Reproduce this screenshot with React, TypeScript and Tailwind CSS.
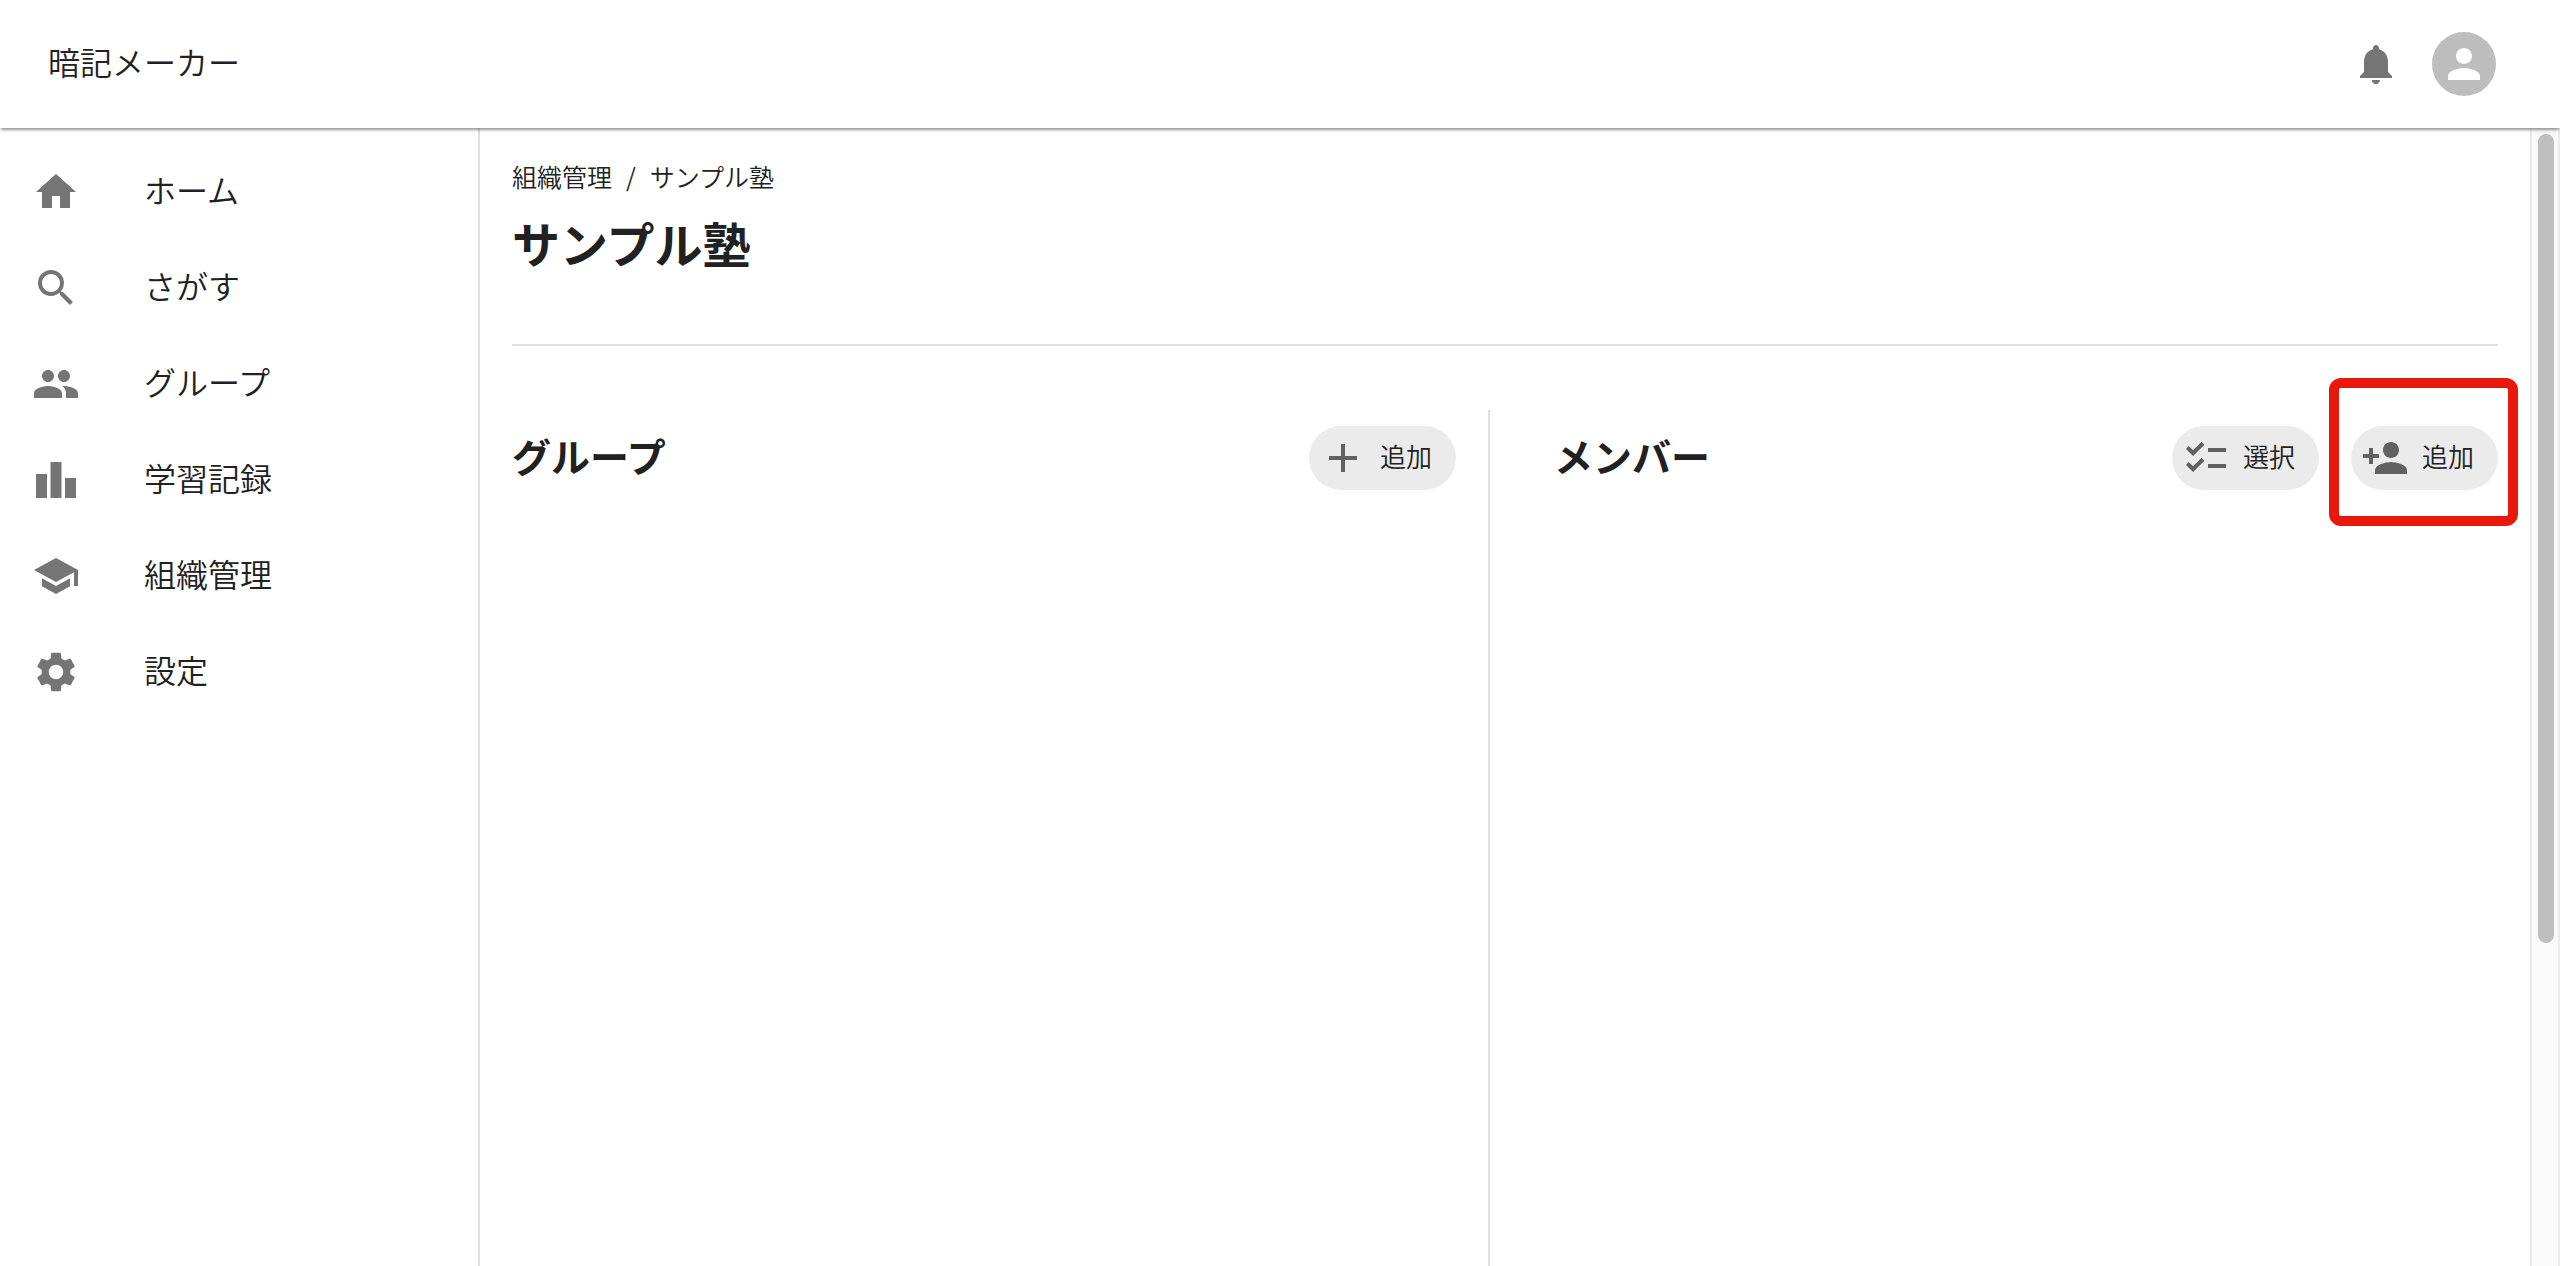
import type { ComponentType } from "react";
import {
  MdAdd,
  MdChecklist,
  MdHome,
  MdLeaderboard,
  MdNotifications,
  MdPeople,
  MdPerson,
  MdPersonAdd,
  MdSchool,
  MdSearch,
  MdSettings,
} from "react-icons/md";

type Icon = ComponentType<{ className?: string }>;

const navItems: { label: string; icon: Icon }[] = [
  { label: "ホーム", icon: MdHome },
  { label: "さがす", icon: MdSearch },
  { label: "グループ", icon: MdPeople },
  { label: "学習記録", icon: MdLeaderboard },
  { label: "組織管理", icon: MdSchool },
  { label: "設定", icon: MdSettings },
];

function Header() {
  return (
    <header className="z-10 flex h-32 shrink-0 items-center justify-between bg-white pr-16 pl-12 shadow-[0_4px_2px_-2px_rgba(0,0,0,0.2),0_2px_2px_0_rgba(0,0,0,0.14),0_2px_6px_0_rgba(0,0,0,0.12)]">
      <a href="#" className="pb-1.5 text-[32px] leading-12">
        暗記メーカー
      </a>
      <div className="flex items-center gap-8">
        <button type="button" aria-label="通知">
          <MdNotifications className="size-12 text-[#757575]" />
        </button>
        <button
          type="button"
          aria-label="アカウント"
          className="flex size-16 items-center justify-center rounded-full bg-[#bdbdbd]"
        >
          <MdPerson className="size-12 text-white" />
        </button>
      </div>
    </header>
  );
}

function Sidebar() {
  return (
    <nav className="w-120 shrink-0 border-r-2 border-[#e0e0e0] pt-4">
      <ul>
        {navItems.map(({ label, icon: ItemIcon }) => (
          <li key={label}>
            <a href="#" className="flex h-24 items-center gap-16 px-8">
              <ItemIcon className="size-12 text-[#757575]" />
              <span className="pb-1.5 text-[32px] leading-12">{label}</span>
            </a>
          </li>
        ))}
      </ul>
    </nav>
  );
}

function ChipButton({ label, icon: ChipIcon }: { label: string; icon: Icon }) {
  return (
    <button
      type="button"
      className="flex h-16 items-center gap-[13px] rounded-full bg-[#ebebeb] pr-6 pl-[10px] text-[26px] leading-10"
    >
      <ChipIcon className="size-12 text-[#616161]" />
      <span className="pb-1">{label}</span>
    </button>
  );
}

function Scrollbar() {
  return (
    <div className="w-[30px] shrink-0 border-x-2 border-[#ebebeb] bg-[#fafafa] px-1 pt-[6px]">
      <div className="ml-auto h-5/7 w-4 rounded-full bg-[#bfbfbf]" />
    </div>
  );
}

export default function App() {
  return (
    <div className="flex h-screen flex-col bg-white font-['Noto_Sans_CJK_JP',sans-serif] font-[350] text-[#212121]">
      <Header />
      <div className="flex min-h-0 flex-1">
        <Sidebar />
        <main className="flex min-w-0 flex-1 flex-col px-8 pt-[30px]">
          <div className="flex gap-3.5 text-[25px] leading-9">
            <a href="#">組織管理</a>
            <span>/</span>
            <a href="#">サンプル塾</a>
          </div>
          <h1 className="mt-3 text-[48px] leading-18 font-bold">サンプル塾</h1>
          <hr className="mt-[66px] border-t-2 border-[#e0e0e0]" />
          <div className="mt-16 flex flex-1">
            <section className="flex-1 pt-4">
              <div className="flex items-center justify-between">
                <h2 className="pb-1.5 text-[39px] leading-14 font-bold">
                  グループ
                </h2>
                <ChipButton label="追加" icon={MdAdd} />
              </div>
            </section>
            <div className="mr-16 ml-8 w-0.5 bg-[#e0e0e0]" />
            <section className="flex-1 pt-4">
              <div className="flex items-center justify-between">
                <h2 className="pb-1.5 text-[39px] leading-14 font-bold">
                  メンバー
                </h2>
                <div className="flex gap-8">
                  <ChipButton label="選択" icon={MdChecklist} />
                  <div className="relative">
                    <ChipButton label="追加" icon={MdPersonAdd} />
                    {/* highlight frame around the add-member button */}
                    <div className="pointer-events-none absolute -top-12 -right-5 -bottom-9 -left-[22px] rounded-xl border-10 border-[#e8190c]" />
                  </div>
                </div>
              </div>
            </section>
          </div>
        </main>
        <Scrollbar />
      </div>
    </div>
  );
}
